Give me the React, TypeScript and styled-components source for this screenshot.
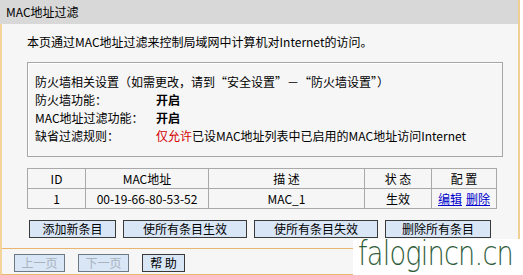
import React from "react";
import styled, { createGlobalStyle } from "styled-components";

const Global = createGlobalStyle`
  html, body { margin: 0; padding: 0; background: #ffffff; }
  body { font-family: "Noto Sans CJK SC", "Liberation Sans", sans-serif; font-size: 12px; color: #000; }
`;

const Page = styled.div`
  position: relative;
  width: 523px;
  height: 275px;
  overflow: hidden;
  background: #ffffff;
`;

const Frame = styled.div`
  width: 516px;
  height: 274px;
  border-left: 2px solid #f3d49a;
  border-right: 2px solid #f1cf92;
  border-bottom: 1px solid #e9b86a;
  background: #f6f6f6;
  display: flex;
  flex-direction: column;
`;

const TitleBar = styled.div`
  height: 24px;
  margin-left: -2px;
  padding-left: 6px;
  background: #d8d8d8;
  display: flex;
  align-items: center;
  font-size: 12px;
  line-height: 24px;
`;

const Content = styled.div`
  padding: 0 20px 0 25px;
  display: flex;
  flex-direction: column;
`;

const Intro = styled.div`
  margin-top: 9px;
  line-height: 18px;
`;

const InfoBox = styled.div`
  margin-top: 11px;
  width: 467px;
  border: 1px solid #a6a6a6;
  box-shadow: inset 1px 1px 0 #ffffff;
  padding: 10px 0 11px 7px;
  display: flex;
  flex-direction: column;
`;

const InfoRow = styled.div`
  display: flex;
  height: 18px;
  line-height: 18px;
`;

const Label = styled.span`
  width: 121px;
`;

const Value = styled.span<{ $bold?: boolean }>`
  font-weight: ${(p) => (p.$bold ? 700 : 400)};
`;

const Red = styled.span`
  color: #d40000;
`;

const Table = styled.table`
  margin-top: 11px;
  width: 470px;
  border-collapse: collapse;
  table-layout: fixed;
`;

const Cell = styled.td<{ $w?: number }>`
  height: 19px;
  padding: 0;
  border: 1px solid #a9a9a9;
  text-align: center;
  line-height: 19px;
  width: ${(p) => (p.$w ? `${p.$w}px` : "auto")};
`;

const Link = styled.a`
  color: #0000cc;
  text-decoration: underline;
  margin: 0 2px;
`;

const ButtonRow = styled.div`
  margin-top: 11px;
  display: flex;
  gap: 7px;
  padding-left: 2px;
`;

const Btn = styled.button<{ $w: number; $disabled?: boolean }>`
  width: ${(p) => p.$w}px;
  height: 18px;
  padding: 0;
  background: #d9e6f6;
  border: 1px solid ${(p) => (p.$disabled ? "#6d7a86" : "#3a3a3a")};
  font-family: "Noto Sans CJK SC", sans-serif;
  font-size: 12px;
  line-height: 16px;
  color: ${(p) => (p.$disabled ? "#a9b3bd" : "#000")};
`;

const Divider = styled.div`
  margin-top: 10px;
  height: 1px;
  background: #eab56c;
`;

const NavRow = styled.div`
  margin-top: 5px;
  display: flex;
  gap: 13px;
  padding-left: 12px;
`;

const Watermark = styled.div`
  position: absolute;
  left: 353px;
  top: 239px;
  width: 170px;
  height: 36px;
  background: #ffffff;
`;

const WatermarkText = styled.span`
  position: absolute;
  left: 5px;
  top: 0px;
  font-family: "DejaVu Sans", sans-serif;
  font-weight: 200;
  font-size: 34px;
  line-height: 28px;
  letter-spacing: -1px;
  color: #2f5d3a;
  white-space: nowrap;
  transform: scaleX(0.8);
  transform-origin: left top;
`;

export default function App() {
  return (
    <>
      <Global />
      <Page>
        <Frame>
          <TitleBar>MAC地址过滤</TitleBar>
          <Content>
            <Intro>本页通过MAC地址过滤来控制局域网中计算机对Internet的访问。</Intro>
            <InfoBox>
              <InfoRow>防火墙相关设置（如需更改，请到“安全设置”－“防火墙设置”）</InfoRow>
              <InfoRow>
                <Label>防火墙功能：</Label>
                <Value $bold>开启</Value>
              </InfoRow>
              <InfoRow>
                <Label>MAC地址过滤功能：</Label>
                <Value $bold>开启</Value>
              </InfoRow>
              <InfoRow>
                <Label>缺省过滤规则：</Label>
                <Value>
                  <Red>仅允许</Red>已设MAC地址列表中已启用的MAC地址访问Internet
                </Value>
              </InfoRow>
            </InfoBox>
            <Table>
              <tbody>
                <tr>
                  <Cell $w={57}>ID</Cell>
                  <Cell $w={122}>MAC地址</Cell>
                  <Cell $w={155}>描 述</Cell>
                  <Cell $w={66}>状 态</Cell>
                  <Cell>配 置</Cell>
                </tr>
                <tr>
                  <Cell>1</Cell>
                  <Cell>00-19-66-80-53-52</Cell>
                  <Cell>MAC_1</Cell>
                  <Cell>生效</Cell>
                  <Cell>
                    <Link>编辑</Link>
                    <Link>删除</Link>
                  </Cell>
                </tr>
              </tbody>
            </Table>
            <ButtonRow>
              <Btn $w={87}>添加新条目</Btn>
              <Btn $w={124}>使所有条目生效</Btn>
              <Btn $w={124}>使所有条目失效</Btn>
              <Btn $w={106}>删除所有条目</Btn>
            </ButtonRow>
          </Content>
          <Divider />
          <NavRow>
            <Btn $w={51} $disabled>上一页</Btn>
            <Btn $w={51} $disabled>下一页</Btn>
            <Btn $w={43}>帮 助</Btn>
          </NavRow>
        </Frame>
        <Watermark>
          <WatermarkText>falogincn.cn</WatermarkText>
        </Watermark>
      </Page>
    </>
  );
}
